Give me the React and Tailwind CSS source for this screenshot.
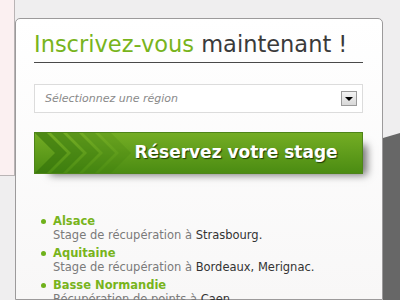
const regions = [
  { name: "Alsace", lead: "Stage de récupération à ", cities: "Strasbourg." },
  { name: "Aquitaine", lead: "Stage de récupération à ", cities: "Bordeaux, Merignac." },
  { name: "Basse Normandie", lead: "Récupération de points à ", cities: "Caen." },
];

const Chevrons = () => (
  <svg width="110" height="40" viewBox="0 0 110 40" className="shrink-0">
    {[0, 1, 2, 3, 4].map((i) => (
      <polygon
        key={i}
        points={`${i * 16},0 ${i * 16 + 12},0 ${i * 16 + 32},20 ${i * 16 + 12},40 ${i * 16},40 ${i * 16 + 20},20`}
        fill="#2f6e0a"
        opacity={0.55 - i * 0.1}
      />
    ))}
  </svg>
);

const App = () => {
  return (
    <div
      className="flex w-[400px] h-[300px] overflow-hidden bg-[#efeeef]"
      style={{ fontFamily: '"DejaVu Sans", Verdana, sans-serif' }}
    >
      <div className="w-[15px] h-[176px] shrink-0 bg-[#fbf0f1] border-r border-b border-[#b9b4b5]" />

      <div className="flex-1 mt-[18px] rounded-t-[5px] border border-[#9c9a9b] bg-gradient-to-b from-white to-[#f8f7f7] pl-[18px] pr-[19px] pt-[11px]">
        <h1 className="text-[22.5px] leading-[28px] pb-[4px] border-b border-[#4a4a4a] whitespace-nowrap">
          <span className="text-[#78b41c]">Inscrivez-vous</span>{" "}
          <span className="text-[#3a3a3a]">maintenant !</span>
        </h1>

        <div className="mt-[21px] h-[29px] border border-[#dcdcdc] bg-white flex items-center justify-between pl-[10px] pr-[5px]">
          <span className="text-[11px] italic text-[#8a8a8a] pt-[2px]">Sélectionnez une région</span>
          <span className="w-[16px] h-[15px] border border-[#9a9a9a] bg-gradient-to-b from-[#f4f4f4] to-[#d8d8d8] flex items-center justify-center">
            <span className="w-0 h-0 border-l-[4px] border-r-[4px] border-t-[4px] border-l-transparent border-r-transparent border-t-black" />
          </span>
        </div>

        <button className="mt-[19px] w-full h-[42px] flex items-center border border-[#4e8419] bg-gradient-to-b from-[#74ad24] to-[#4b8c12] shadow-[10px_7px_8px_-6px_rgba(0,0,0,0.55)] overflow-hidden">
          <Chevrons />
          <span className="ml-[-35px] flex-1 text-center text-[17px] font-bold text-white [text-shadow:1px_1px_1px_#1f3d05] whitespace-nowrap">
            Réservez votre stage
          </span>
        </button>

        <ul className="mt-[40px] pl-[7px] flex flex-col gap-[4px]">
          {regions.map((r) => (
            <li key={r.name} className="flex gap-[7px]">
              <span className="mt-[5px] w-[5px] h-[5px] rounded-full bg-[#6fb11b] shrink-0" />
              <div className="leading-[14px]">
                <div className="text-[11.5px] font-bold text-[#78b41c]">{r.name}</div>
                <div className="text-[11.5px] text-[#7a7a7a] whitespace-nowrap">
                  {r.lead}
                  <span className="text-[#333]">{r.cities}</span>
                </div>
              </div>
            </li>
          ))}
        </ul>
      </div>

      <div className="w-[17px] shrink-0 flex flex-col">
        <div className="h-[128px]" />
        <div className="flex-1 bg-[#676767] [clip-path:polygon(0_10px,100%_5px,100%_100%,0_100%)]" />
      </div>
    </div>
  );
};

export default App;
